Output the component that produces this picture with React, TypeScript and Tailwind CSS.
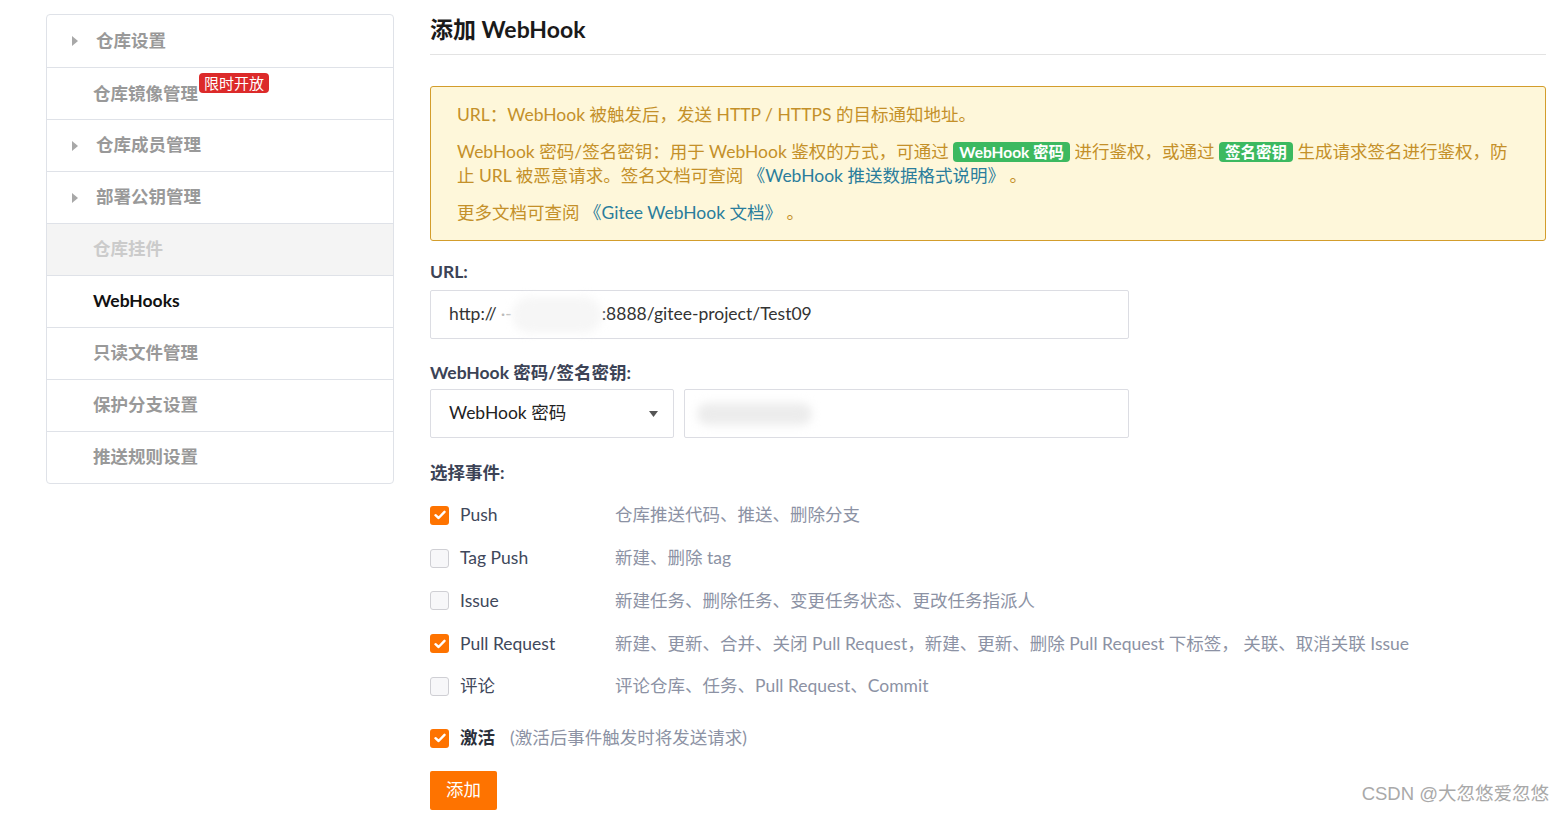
import React from "react";

const FONT = { fontFamily: 'Lato, "Noto Sans CJK SC", "Noto Sans", sans-serif' };

function Arrow() {
  return (
    <svg width="6" height="10" viewBox="0 0 6 10" className="shrink-0">
      <path d="M0 0 L6 5 L0 10 Z" fill="#a8a8a8" />
    </svg>
  );
}

function Check({ checked }: { checked: boolean }) {
  if (checked)
    return (
      <span className="w-[19px] h-[19px] rounded-[3px] bg-[#fe7300] flex items-center justify-center shrink-0">
        <svg width="12" height="10" viewBox="0 0 12 10">
          <path d="M1.5 5.2 L4.6 8 L10.5 1.8" stroke="#fff" strokeWidth="2.4" fill="none" strokeLinecap="round" strokeLinejoin="round" />
        </svg>
      </span>
    );
  return <span className="w-[19px] h-[19px] rounded-[3px] border border-[#cfcfd4] bg-[#f7f7f9] shrink-0" />;
}

const navItems: { label: string; arrow?: boolean; badge?: boolean; disabled?: boolean; active?: boolean }[] = [
  { label: "仓库设置", arrow: true },
  { label: "仓库镜像管理", badge: true },
  { label: "仓库成员管理", arrow: true },
  { label: "部署公钥管理", arrow: true },
  { label: "仓库挂件", disabled: true },
  { label: "WebHooks", active: true },
  { label: "只读文件管理" },
  { label: "保护分支设置" },
  { label: "推送规则设置" },
];

const events = [
  { label: "Push", desc: "仓库推送代码、推送、删除分支", checked: true },
  { label: "Tag Push", desc: "新建、删除 tag", checked: false },
  { label: "Issue", desc: "新建任务、删除任务、变更任务状态、更改任务指派人", checked: false },
  { label: "Pull Request", desc: "新建、更新、合并、关闭 Pull Request，新建、更新、删除 Pull Request 下标签， 关联、取消关联 Issue", checked: true },
  { label: "评论", desc: "评论仓库、任务、Pull Request、Commit", checked: false },
];

export default function App() {
  return (
    <div className="relative w-full h-[813px] bg-white flex overflow-hidden" style={FONT}>
      {/* Sidebar */}
      <div className="pl-[46px] pt-[14px] shrink-0">
        <div className="w-[348px] border border-[#dfe2e8] rounded-[4px] overflow-hidden">
          {navItems.map((it, i) => (
            <div
              key={it.label}
              className={`h-[52px] flex items-center text-[17.5px] font-bold ${i > 0 ? "border-t border-[#dfe2e8]" : ""} ${
                it.disabled ? "bg-[#f4f4f4] text-[#cbcbcb]" : it.active ? "text-[#111]" : "text-[#999999]"
              } ${it.arrow ? "pl-[25px]" : "pl-[46px]"}`}
            >
              {it.arrow && (
                <span className="mr-[18px] flex items-center">
                  <Arrow />
                </span>
              )}
              <span className={it.badge ? "relative top-[1px]" : ""}>{it.label}</span>
              {it.badge && (
                <span className="relative -top-[11px] ml-[1px] bg-[#dc2a2a] text-white text-[15px] font-normal leading-[20px] px-[5px] rounded-[4px]">
                  限时开放
                </span>
              )}
            </div>
          ))}
        </div>
      </div>

      {/* Main */}
      <div className="ml-[36px] w-[1116px] pt-[15px] shrink-0">
        <div className="h-[40px] border-b border-[#e3e3e3] pb-[10px]">
          <h1 className="text-[23px] font-bold leading-[29px] text-[#1a1a1a]">添加 WebHook</h1>
        </div>

        <div className="mt-[31px] border border-[#d39d2c] bg-[#fef7da] rounded-[3px] px-[26px] py-[16px] text-[17.5px] leading-[23.5px] text-[#c49029]">
          <p>URL：WebHook 被触发后，发送 HTTP / HTTPS 的目标通知地址。</p>
          <p className="mt-[13.5px]">
            <span className="whitespace-nowrap block">
              WebHook 密码/签名密钥：用于 WebHook 鉴权的方式，可通过{" "}
              <span className="bg-[#3cb960] text-white font-bold text-[15.5px] px-[6px] py-[1px] rounded-[4px] leading-[20px]">WebHook 密码</span>{" "}
              进行鉴权，或通过{" "}
              <span className="bg-[#3cb960] text-white font-bold text-[15.5px] px-[6px] py-[1px] rounded-[4px] leading-[20px]">签名密钥</span>{" "}
              生成请求签名进行鉴权，防
            </span>
            <span className="whitespace-nowrap block">
              止 URL 被恶意请求。签名文档可查阅 <span className="text-[#2a7d9c]">《WebHook 推送数据格式说明》</span> 。
            </span>
          </p>
          <p className="mt-[13.5px]">
            更多文档可查阅 <span className="text-[#2a7d9c]">《Gitee WebHook 文档》</span> 。
          </p>
        </div>

        <div className="mt-[19px] text-[17.5px] leading-[23px] font-bold text-[#3c4356]">URL:</div>
        <div className="mt-[7px] w-[699px] h-[49px] border border-[#dcdde3] rounded-[2px] flex items-center pl-[18px] text-[17.5px] text-[#333]">
          <span>http://</span>
          <span className="text-[#bbb] ml-[4px]">·-</span>
          <span className="inline-block w-[90px] h-[36px] bg-[#f6f6f6] rounded-full blur-[4px]" />
          <span>:8888/gitee-project/Test09</span>
        </div>

        <div className="mt-[22px] text-[17.5px] leading-[23px] font-bold text-[#3c4356]">WebHook 密码/签名密钥:</div>
        <div className="mt-[5px] flex gap-[10px]">
          <div className="w-[244px] h-[49px] border border-[#dcdde3] rounded-[2px] flex items-center justify-between pl-[18px] pr-[15px] text-[17.5px] text-[#222]">
            <span>WebHook 密码</span>
            <svg width="9" height="6" viewBox="0 0 9 6">
              <path d="M0 0 H9 L4.5 6 Z" fill="#555" />
            </svg>
          </div>
          <div className="w-[445px] h-[49px] border border-[#dcdde3] rounded-[2px] flex items-center pl-[12px]">
            <span className="inline-block w-[115px] h-[22px] bg-[#ececec] rounded-full blur-[5px]" />
          </div>
        </div>

        <div className="mt-[23px] text-[17.5px] leading-[23px] font-bold text-[#3c4356]">选择事件:</div>
        <div className="mt-[10px]">
          {events.map((e) => (
            <div key={e.label} className="h-[42.8px] flex items-center text-[17.5px]">
              <Check checked={e.checked} />
              <span className="ml-[11px] w-[155px] text-[#40485b]">{e.label}</span>
              <span className="text-[#8c92a4] whitespace-nowrap">{e.desc}</span>
            </div>
          ))}
        </div>

        <div className="mt-[14px] h-[33px] flex items-center text-[17.5px]">
          <Check checked />
          <span className="ml-[11px] font-bold text-[#2a2f3a]">激活</span>
          <span className="ml-[15px] text-[#8c92a4]">(激活后事件触发时将发送请求)</span>
        </div>

        <button className="mt-[16px] w-[67px] h-[39px] bg-[#fe7300] text-white text-[17.5px] rounded-[2px] flex items-center justify-center">
          添加
        </button>
      </div>

      <div className="absolute right-[16px] bottom-[5px] text-[18.5px] text-[#a9a9a9]" style={{ fontFamily: '"Liberation Sans", "Noto Sans CJK SC", sans-serif' }}>
        CSDN @大忽悠爱忽悠
      </div>
    </div>
  );
}
